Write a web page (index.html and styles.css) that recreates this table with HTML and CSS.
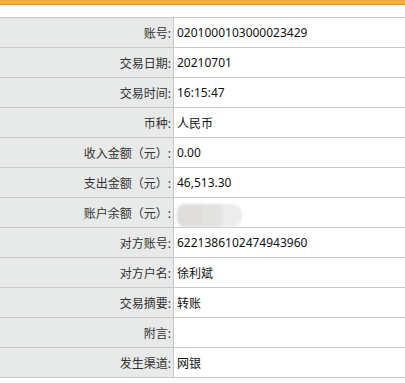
FILE: index.html
```html
<!DOCTYPE html>
<html lang="zh-CN">
<head>
<meta charset="utf-8">
<link rel="stylesheet" href="styles.css">
</head>
<body>
<div class="topbar"></div>
<div class="detail">
  <div class="label">账号:</div><div class="value">0201000103000023429</div>
  <div class="label">交易日期:</div><div class="value">20210701</div>
  <div class="label">交易时间:</div><div class="value">16:15:47</div>
  <div class="label">币种:</div><div class="value">人民币</div>
  <div class="label">收入金额（元）:</div><div class="value">0.00</div>
  <div class="label">支出金额（元）:</div><div class="value">46,513.30</div>
  <div class="label">账户余额（元）:</div><div class="value"><span class="masked"><span class="m1"></span><span class="m2"></span><span class="m3"></span></span></div>
  <div class="label">对方账号:</div><div class="value">6221386102474943960</div>
  <div class="label">对方户名:</div><div class="value">徐利斌</div>
  <div class="label">交易摘要:</div><div class="value">转账</div>
  <div class="label">附言:</div><div class="value"></div>
  <div class="label">发生渠道:</div><div class="value">网银</div>
</div>
</body>
</html>
```
FILE: styles.css
```css
html, body {
  margin: 0;
  padding: 0;
  background: #ffffff;
}
body {
  font-family: "Noto Sans", "Noto Sans CJK SC", sans-serif;
  font-size: 12px;
  color: #222222;
  overflow: hidden;
}
.topbar {
  height: 4px;
  background: #f8ad3a;
  border-bottom: 1px solid #e8961c;
}
.detail {
  margin-top: 12px;
  display: grid;
  grid-template-columns: 174px 1fr;
  border-top: 1px solid #c8c8c8;
}
.label, .value {
  height: 29px;
  border-bottom: 1px solid #c8c8c8;
  display: flex;
  align-items: center;
}
.label {
  background: #e8e9e9;
  justify-content: flex-end;
  padding-right: 2px;
  border-right: 1px solid #c8c8c8;
  color: #333333;
}
.value {
  padding-left: 3px;
  color: #111111;
}
.masked {
  display: flex;
  height: 23px;
  margin-top: 6px;
  border-radius: 8px;
  overflow: hidden;
  filter: blur(0.8px);
}
.m1 { width: 25px; background: #dfdddc; }
.m2 { width: 20px; background: #e2e2e1; }
.m3 { width: 20px; background: #ececec; border-radius: 0 10px 10px 0; }
```
